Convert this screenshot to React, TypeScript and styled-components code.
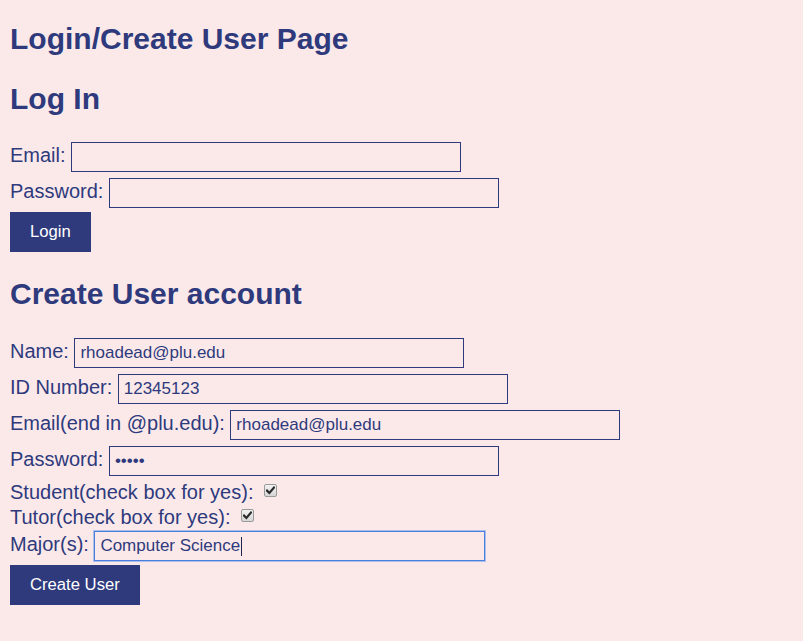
import React from "react";
import styled, { createGlobalStyle } from "styled-components";

const NAVY = "#2e3a7c";
const BG = "#fbe9ea";

const GlobalStyle = createGlobalStyle`
  html, body {
    margin: 0;
    padding: 0;
    background: ${BG};
  }
  body {
    font-family: "Liberation Sans", Arial, sans-serif;
    color: ${NAVY};
  }
`;

const Page = styled.main`
  display: flex;
  flex-direction: column;
  align-items: flex-start;
  padding: 21px 10px 30px;
  min-height: 641px;
  box-sizing: border-box;
`;

const Heading = styled.h1<{ $top?: number }>`
  margin: ${(p) => p.$top ?? 0}px 0 0;
  font-size: 30px;
  line-height: 35px;
  font-weight: bold;
  color: ${NAVY};
`;

const Form = styled.form<{ $top?: number }>`
  display: flex;
  flex-direction: column;
  align-items: flex-start;
  margin-top: ${(p) => p.$top ?? 26}px;
`;

const Row = styled.label<{ $top?: number }>`
  display: flex;
  align-items: baseline;
  gap: 5.5px;
  margin-top: ${(p) => p.$top ?? 0}px;
  font-size: 20px;
  line-height: 23px;
  color: ${NAVY};
`;

const CheckRow = styled.label<{ $top?: number }>`
  display: flex;
  align-items: center;
  gap: 5.5px;
  margin-top: ${(p) => p.$top ?? 0}px;
  font-size: 20px;
  line-height: 23px;
  color: ${NAVY};
`;

const TextInput = styled.input<{ $focused?: boolean }>`
  box-sizing: border-box;
  width: ${(p) => (p.$focused ? 391 : 390)}px;
  height: 30px;
  margin: 0;
  padding: 0 5px;
  border: 1px solid ${(p) => (p.$focused ? "#4a7fdf" : NAVY)};
  box-shadow: ${(p) => (p.$focused ? "0 0 0 1px rgba(110,155,235,0.55)" : "none")};
  border-radius: 0;
  background: transparent;
  font-family: "Liberation Sans", Arial, sans-serif;
  font-size: 17px;
  color: ${NAVY};
  outline: none;
`;

const FieldWrap = styled.span`
  position: relative;
  display: inline-flex;
`;

const Caret = styled.span`
  position: absolute;
  left: 147px;
  top: 6px;
  width: 1px;
  height: 19px;
  background: #1c2450;
  pointer-events: none;
`;

const CheckBox = styled.span`
  display: inline-flex;
  align-items: center;
  justify-content: center;
  box-sizing: border-box;
  width: 13px;
  height: 13px;
  margin-left: 5px;
  margin-bottom: 4px;
  border: 1px solid #9a9a9a;
  border-radius: 2px;
  background: linear-gradient(#f2f2f2, #d6d6d6);
  & svg {
    display: block;
  }
`;

const HiddenCheck = styled.input`
  position: absolute;
  opacity: 0;
  width: 0;
  height: 0;
  margin: 0;
`;

const Button = styled.button<{ $top?: number }>`
  height: 40px;
  margin-top: ${(p) => p.$top ?? 0}px;
  padding: 0 20px;
  border: none;
  border-radius: 0;
  background: ${NAVY};
  color: #ffffff;
  font-family: "Liberation Sans", Arial, sans-serif;
  font-size: 16.67px;
  cursor: pointer;
`;

function Check({ checked }: { checked: boolean }) {
  return (
    <>
      <HiddenCheck type="checkbox" defaultChecked={checked} />
      <CheckBox aria-hidden="true">
        {checked && (
          <svg width="9" height="9" viewBox="0 0 9 9">
            <path
              d="M1 4.6 L3.4 7 L8 1.6"
              fill="none"
              stroke="#2a2a2a"
              strokeWidth="2.2"
              strokeLinecap="square"
            />
          </svg>
        )}
      </CheckBox>
    </>
  );
}

export default function App() {
  return (
    <>
      <GlobalStyle />
      <Page>
        <Heading>Login/Create User Page</Heading>
        <Heading as="h2" $top={25}>
          Log In
        </Heading>
        <Form onSubmit={(e) => e.preventDefault()}>
          <Row>
            Email:
            <TextInput type="text" />
          </Row>
          <Row $top={6}>
            Password:
            <TextInput type="password" />
          </Row>
          <Button type="submit" $top={4}>
            Login
          </Button>
        </Form>

        <Heading as="h2" $top={24}>
          Create User account
        </Heading>
        <Form $top={27} onSubmit={(e) => e.preventDefault()}>
          <Row>
            Name:
            <TextInput type="text" defaultValue="rhoadead@plu.edu" />
          </Row>
          <Row $top={6}>
            ID Number:
            <TextInput type="text" defaultValue="12345123" />
          </Row>
          <Row $top={6}>
            Email(end in @plu.edu):
            <TextInput type="text" defaultValue="rhoadead@plu.edu" />
          </Row>
          <Row $top={6}>
            Password:
            <TextInput type="password" defaultValue="abcde" />
          </Row>
          <CheckRow $top={5}>
            Student(check box for yes):
            <Check checked />
          </CheckRow>
          <CheckRow $top={2}>
            Tutor(check box for yes):
            <Check checked />
          </CheckRow>
          <Row $top={2}>
            Major(s):
            <FieldWrap>
              <TextInput type="text" $focused defaultValue="Computer Science" />
              <Caret />
            </FieldWrap>
          </Row>
          <Button type="submit" $top={4}>
            Create User
          </Button>
        </Form>
      </Page>
    </>
  );
}
